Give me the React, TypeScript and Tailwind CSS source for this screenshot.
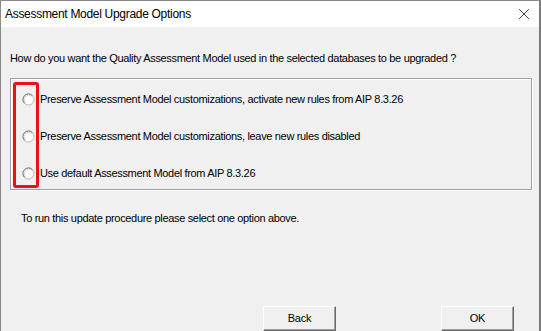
import { X } from "lucide-react";

const options = [
  "Preserve Assessment Model customizations, activate new rules from AIP 8.3.26",
  "Preserve Assessment Model customizations, leave new rules disabled",
  "Use default Assessment Model from AIP 8.3.26",
];

function Radio() {
  return (
    <svg width="13" height="13" viewBox="0 0 13 13" className="shrink-0">
      <circle cx="6.5" cy="6.5" r="5.5" fill="#ffffff" stroke="#b4b4b4" strokeWidth="1" />
      <path d="M2.6 10.4 A5.5 5.5 0 0 1 10.4 2.6" fill="none" stroke="#7a7a7a" strokeWidth="1" />
      <path d="M3.4 9.6 A4.4 4.4 0 0 1 9.6 3.4" fill="none" stroke="#d4d4d4" strokeWidth="1" />
    </svg>
  );
}

function Button({ label }: { label: string }) {
  return (
    <button className="h-[25px] w-[73px] bg-[#f0f0f0] border border-t-white border-l-white border-r-[#696969] border-b-[#696969] shadow-[inset_-1px_-1px_0_#a0a0a0] text-[11px] tracking-[-0.2px] text-black font-['Liberation_Sans',Arial,sans-serif]">
      {label}
    </button>
  );
}

export default function App() {
  return (
    <div className="w-[541px] h-[331px] flex flex-col border-l border-t border-[#8a8a8a] bg-[#f0f0f0] overflow-hidden font-['Liberation_Sans',Arial,sans-serif] text-black">
      {/* title bar */}
      <div className="h-[26px] shrink-0 bg-white flex items-center justify-between pl-[4px] pr-[6px] border-r-2 border-[#7a7a7a]">
        <span className="text-[12px] tracking-[-0.3px] text-black">Assessment Model Upgrade Options</span>
        <X size={18} strokeWidth={1} color="#000" />
      </div>

      <div className="flex-1 flex flex-col pl-[9px] pr-[7px] pt-[25px] border-r-2 border-[#7a7a7a]">
        <p className="text-[11px] leading-[13px] tracking-[-0.33px]">
          How do you want the Quality Assessment Model used in the selected databases to be upgraded ?
        </p>

        {/* group box */}
        <div className="relative mt-[13px] h-[112px] border border-[#a0a0a0] shadow-[inset_1px_1px_0_#ffffff,1px_1px_0_#ffffff] flex flex-col pt-[14px] pl-[11px] gap-[24px]">
          {options.map((o) => (
            <div key={o} className="flex items-center gap-[5px] h-[13px]">
              <Radio />
              <span className="text-[11px] leading-[13px] tracking-[-0.33px]">{o}</span>
            </div>
          ))}
          {/* red highlight */}
          <div className="absolute left-[2px] top-[3px] w-[26px] h-[106px] border-[3px] border-[#e8101a] rounded-[3px]" />
        </div>

        <p className="mt-[22px] pl-[11px] text-[11px] leading-[13px] tracking-[-0.33px]">
          To run this update procedure please select one option above.
        </p>

        <div className="mt-auto flex justify-end gap-[105px] pr-[18px]">
          <Button label="Back" />
          <Button label="OK" />
        </div>
      </div>
    </div>
  );
}
